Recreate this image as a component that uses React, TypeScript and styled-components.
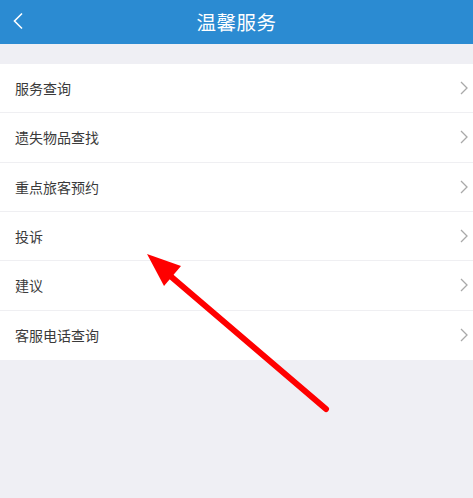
import React from 'react';
import styled, { createGlobalStyle } from 'styled-components';

const GlobalStyle = createGlobalStyle`
  html, body {
    margin: 0;
    padding: 0;
    background: #efeff4;
  }
  body {
    font-family: "Noto Sans CJK SC", "Noto Sans", sans-serif;
  }
`;

const Page = styled.div`
  position: relative;
  width: 473px;
  height: 498px;
  background: #efeff4;
  overflow: hidden;
`;

const Header = styled.header`
  height: 44px;
  background: #2b8bd2;
  display: flex;
  align-items: center;
  justify-content: center;
  position: relative;
`;

const BackButton = styled.button`
  position: absolute;
  left: 6px;
  top: 8px;
  width: 24px;
  height: 26px;
  border: none;
  background: none;
  padding: 0;
  display: flex;
  align-items: center;
  justify-content: center;
`;

const Title = styled.h1`
  margin: 0 0 2px;
  color: #ffffff;
  font-size: 19.5px;
  font-weight: 400;
  letter-spacing: 0.5px;
`;

const List = styled.ul`
  list-style: none;
  margin: 20px 0 0;
  padding: 0;
  background: #ffffff;
`;

const Row = styled.li<{ $last?: boolean }>`
  box-sizing: border-box;
  height: 49.33px;
  padding: 0 5px 0 15px;
  display: flex;
  align-items: center;
  justify-content: space-between;
  border-bottom: ${(p) => (p.$last ? 'none' : '1px solid #efeff2')};
`;

const Label = styled.span`
  color: #3a3a3a;
  font-size: 14px;
`;

const Overlay = styled.svg`
  position: absolute;
  left: 0;
  top: 0;
  pointer-events: none;
`;

const items = ['服务查询', '遗失物品查找', '重点旅客预约', '投诉', '建议', '客服电话查询'];

const Chevron = () => (
  <svg width="8" height="14" viewBox="0 0 8 14">
    <path d="M1 1 L7 7 L1 13" fill="none" stroke="#a9a9a9" strokeWidth="1.3" />
  </svg>
);

const App = () => (
  <Page>
    <GlobalStyle />
    <Header>
      <BackButton aria-label="返回">
        <svg width="12" height="18" viewBox="0 0 12 18">
          <path d="M10 1.5 L2.5 9 L10 16.5" fill="none" stroke="#ffffff" strokeWidth="1.6" />
        </svg>
      </BackButton>
      <Title>温馨服务</Title>
    </Header>
    <List>
      {items.map((item, i) => (
        <Row key={item} $last={i === items.length - 1}>
          <Label>{item}</Label>
          <Chevron />
        </Row>
      ))}
    </List>
    <Overlay width="473" height="498" viewBox="0 0 473 498">
      <line x1="326" y1="409" x2="168" y2="274" stroke="#ff0000" strokeWidth="6" strokeLinecap="round" />
      <polygon points="147,254 181,266 164,286" fill="#ff0000" />
    </Overlay>
  </Page>
);

export default App;
